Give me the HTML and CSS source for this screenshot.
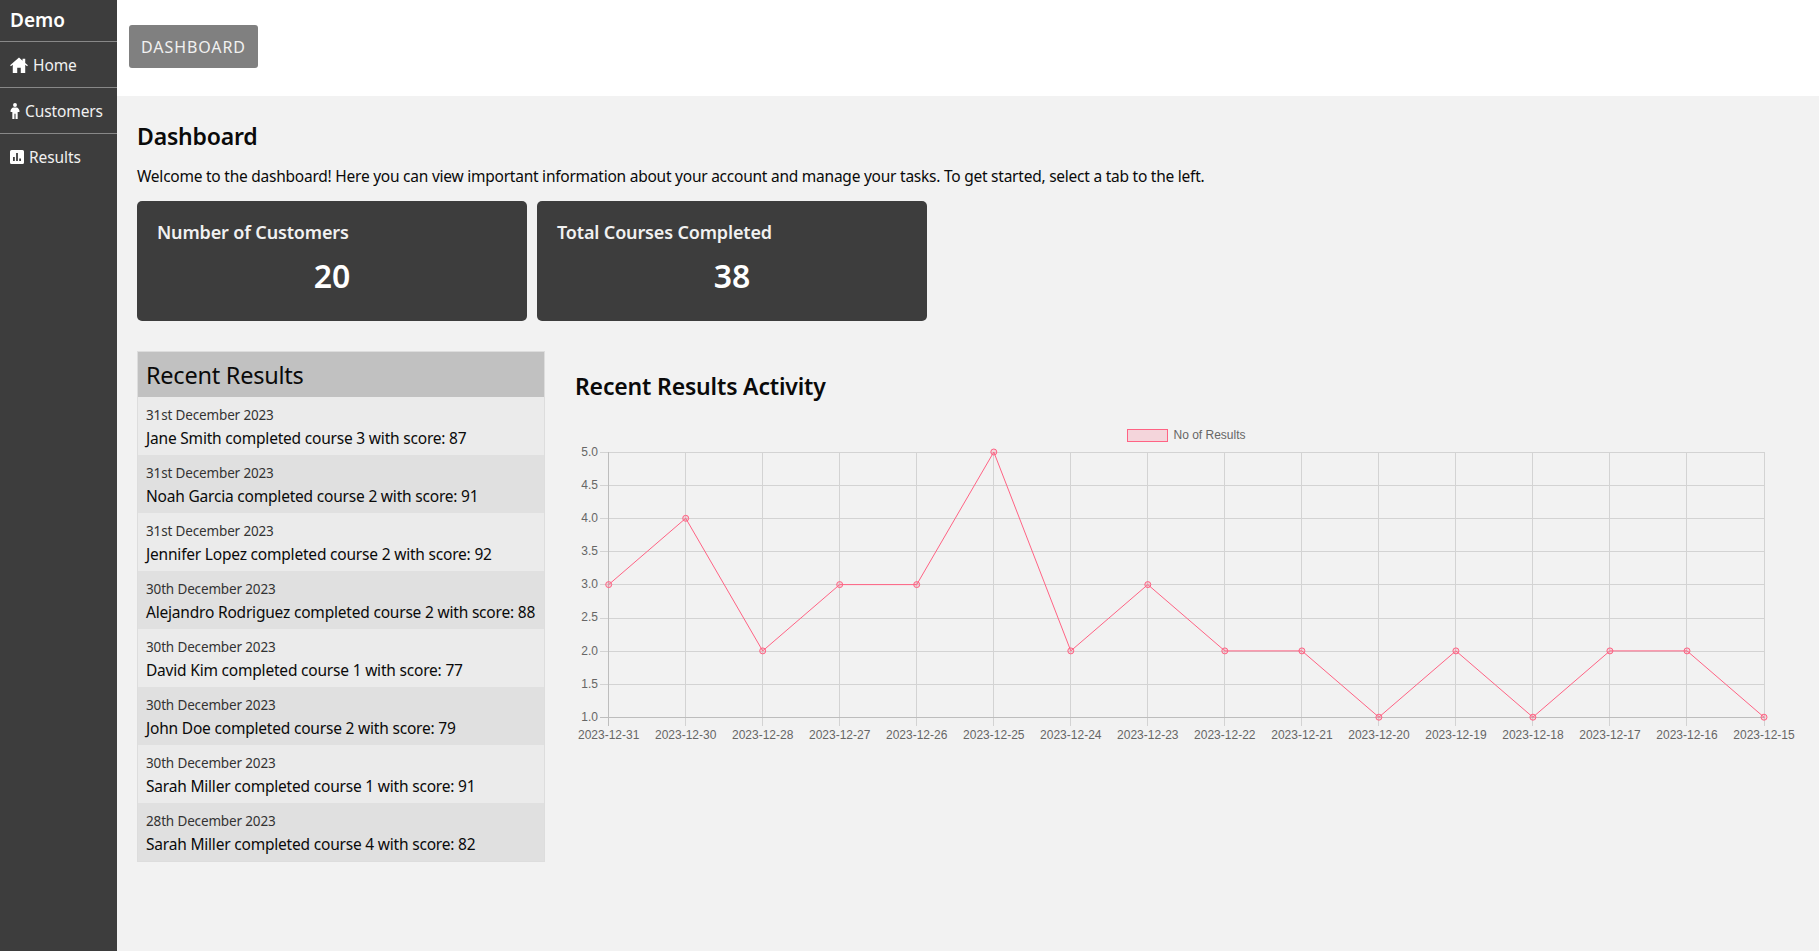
FILE: index.html
```html
<!DOCTYPE html>
<html lang="en">
<head>
<meta charset="utf-8">
<title>Dashboard</title>
<link rel="stylesheet" href="styles.css">
</head>
<body>
<div class="app">
  <nav class="sidebar">
    <div class="brand">Demo</div>
    <a class="nav-item"><svg class="nav-icon home" viewBox="0 0 20 18"><path d="M10 .5 0 9.3l.9 1.1L3 8.6V18h5v-6h4v6h5V8.6l2.1 1.8.9-1.1-3-2.6V2h-3v2.1z"/></svg>Home</a>
    <a class="nav-item"><svg class="nav-icon man" viewBox="0 0 10 18"><circle cx="5" cy="2.2" r="2.2"/><path d="M3.2 5h3.6c1.500 0 3.200 2.300 3.200 3.600V10H8v8H5.600v-6H4.400v6H2v-8H0V8.600C0 7.300 1.700 5 3.200 5z"/></svg>Customers</a>
    <a class="nav-item"><svg class="nav-icon poll" viewBox="0 0 14 14"><path fill-rule="evenodd" d="M1.500 0h11A1.500 1.500 0 0 1 14 1.500v11a1.500 1.500 0 0 1-1.500 1.500h-11A1.500 1.500 0 0 1 0 12.500v-11A1.500 1.500 0 0 1 1.500 0zM3 7v4h1.800V7zm3.100-4v8h1.800V3zm3.100 5.500V11H11V8.500z"/></svg>Results</a>
  </nav>
  <div class="page">
    <header class="topbar"><button class="tab">DASHBOARD</button></header>
    <main class="content">
      <h1 class="title">Dashboard</h1>
      <p class="intro">Welcome to the dashboard! Here you can view important information about your account and manage your tasks. To get started, select a tab to the left.</p>
      <div class="cards">
        <section class="card"><h2 class="card-title">Number of Customers</h2><div class="card-value">20</div></section>
        <section class="card"><h2 class="card-title">Total Courses Completed</h2><div class="card-value">38</div></section>
      </div>
      <div class="lower">
        <section class="results">
          <h2 class="results-head">Recent Results</h2>
          <div class="row"><div class="date">31st December 2023</div><div class="line">Jane Smith completed course 3 with score: 87</div></div>
          <div class="row"><div class="date">31st December 2023</div><div class="line">Noah Garcia completed course 2 with score: 91</div></div>
          <div class="row"><div class="date">31st December 2023</div><div class="line">Jennifer Lopez completed course 2 with score: 92</div></div>
          <div class="row"><div class="date">30th December 2023</div><div class="line">Alejandro Rodriguez completed course 2 with score: 88</div></div>
          <div class="row"><div class="date">30th December 2023</div><div class="line">David Kim completed course 1 with score: 77</div></div>
          <div class="row"><div class="date">30th December 2023</div><div class="line">John Doe completed course 2 with score: 79</div></div>
          <div class="row"><div class="date">30th December 2023</div><div class="line">Sarah Miller completed course 1 with score: 91</div></div>
          <div class="row"><div class="date">28th December 2023</div><div class="line">Sarah Miller completed course 4 with score: 82</div></div>
        </section>
        <section class="activity">
          <h2 class="activity-title">Recent Results Activity</h2>
          <svg class="chart" viewBox="575 420 1230 330" width="1230" height="330">
            <g class="grid">
              <path d="M600 452.500H1764M600 485.500H1764M600 518.500H1764M600 551.500H1764M600 584.500H1764M600 618.500H1764M600 651.500H1764M600 684.500H1764"/>
              <path d="M685.500 452V726M762.500 452V726M839.500 452V726M916.500 452V726M993.500 452V726M1070.500 452V726M1147.500 452V726M1224.500 452V726M1301.500 452V726M1378.500 452V726M1455.500 452V726M1532.500 452V726M1609.500 452V726M1686.500 452V726M1764.500 452V726"/>
            </g>
            <path class="axis" d="M600 717.500H1765M608.500 452V726"/>
            <g class="ticks ticks-y">
              <text x="598" y="455.500">5.0</text><text x="598" y="488.500">4.5</text><text x="598" y="521.500">4.0</text><text x="598" y="554.500">3.5</text><text x="598" y="588">3.0</text><text x="598" y="621">2.5</text><text x="598" y="654.500">2.0</text><text x="598" y="687.500">1.5</text><text x="598" y="720.500">1.0</text>
            </g>
            <g class="ticks ticks-x">
              <text x="608.700" y="739">2023-12-31</text><text x="685.700" y="739">2023-12-30</text><text x="762.700" y="739">2023-12-28</text><text x="839.700" y="739">2023-12-27</text><text x="916.700" y="739">2023-12-26</text><text x="993.800" y="739">2023-12-25</text><text x="1070.800" y="739">2023-12-24</text><text x="1147.800" y="739">2023-12-23</text><text x="1224.800" y="739">2023-12-22</text><text x="1301.900" y="739">2023-12-21</text><text x="1378.900" y="739">2023-12-20</text><text x="1455.900" y="739">2023-12-19</text><text x="1532.900" y="739">2023-12-18</text><text x="1609.900" y="739">2023-12-17</text><text x="1687" y="739">2023-12-16</text><text x="1764" y="739">2023-12-15</text>
            </g>
            <rect class="legend-box" x="1127.500" y="429.500" width="40" height="12"/>
            <text class="legend-text" x="1173.500" y="438.500">No of Results</text>
            <polyline class="series" points="608.700,584.600 685.700,518.300 762.700,650.900 839.700,584.600 916.700,584.600 993.800,452 1070.800,650.900 1147.800,584.600 1224.800,650.900 1301.900,650.900 1378.900,717.200 1455.900,650.900 1532.900,717.200 1609.900,650.900 1687,650.900 1764,717.200"/>
            <g class="points">
              <circle cx="608.700" cy="584.600" r="3"/><circle cx="685.700" cy="518.300" r="3"/><circle cx="762.700" cy="650.900" r="3"/><circle cx="839.700" cy="584.600" r="3"/><circle cx="916.700" cy="584.600" r="3"/><circle cx="993.800" cy="452" r="3"/><circle cx="1070.800" cy="650.900" r="3"/><circle cx="1147.800" cy="584.600" r="3"/><circle cx="1224.800" cy="650.900" r="3"/><circle cx="1301.900" cy="650.900" r="3"/><circle cx="1378.900" cy="717.200" r="3"/><circle cx="1455.900" cy="650.900" r="3"/><circle cx="1532.900" cy="717.200" r="3"/><circle cx="1609.900" cy="650.900" r="3"/><circle cx="1687" cy="650.900" r="3"/><circle cx="1764" cy="717.200" r="3"/>
            </g>
          </svg>
        </section>
      </div>
    </main>
  </div>
</div>
</body>
</html>
```
FILE: styles.css
```css
* { box-sizing: border-box; }
html, body { margin: 0; height: 100%; }
body { font-family: "Noto Sans", sans-serif; font-size: 15.5px; letter-spacing: -0.24px; color: #0a0a0a; background: #f2f2f2; overflow: hidden; }
.app { display: flex; height: 951px; }
.sidebar { width: 117px; flex: none; background: #3d3d3d; color: #f1f1f1; }
.brand { height: 42px; padding-left: 10px; font-size: 19px; font-weight: 600; letter-spacing: 0; line-height: 40px; color: #fff; border-bottom: 1px solid #888; }
.nav-item { display: flex; align-items: center; gap: 5px; height: 46px; padding-left: 10px; border-bottom: 1px solid #888; font-size: 15.5px; letter-spacing: -0.1px; }
.nav-item:last-child { border-bottom: 0; }
.nav-icon { fill: #fff; flex: none; }
.home { width: 18px; height: 16px; }
.man { width: 10px; height: 16px; }
.poll { width: 14px; height: 14px; }
.page { flex: 1; min-width: 0; display: flex; flex-direction: column; }
.topbar { height: 96px; background: #fff; padding: 25px 12px; }
.tab { display: block; width: 129px; height: 43px; padding: 0; border: 0; border-radius: 3px; background: #808080; color: #f1f1f1; font-family: inherit; font-size: 16px; letter-spacing: 0.9px; }
.content { flex: 1; padding: 24px 20px 0; }
.title { margin: 0; font-size: 23px; font-weight: 600; letter-spacing: -0.2px; line-height: 33px; }
.intro { margin: 12px 0 0; line-height: 22px; }
.cards { display: flex; gap: 10px; margin-top: 14px; }
.card { width: 390px; height: 120px; padding: 19px 20px; border-radius: 5px; background: #3d3d3d; color: #f1f1f1; }
.card-title { margin: 0; font-size: 18px; font-weight: 600; letter-spacing: -0.15px; line-height: 25px; }
.card-value { margin-top: 11px; text-align: center; font-size: 32px; font-weight: 600; letter-spacing: 0; line-height: 40px; color: #fff; }
.lower { display: flex; margin-top: 30px; align-items: flex-start; }
.results { width: 408px; flex: none; border: 1px solid #ddd; }
.results-head { margin: 0; height: 45px; padding-left: 8px; background: #c1c1c1; font-size: 23.5px; font-weight: 400; letter-spacing: -0.25px; line-height: 46px; }
.row { height: 58px; padding: 8px 8px 0; background: #ebebeb; }
.row:nth-child(odd) { background: #e0e0e0; }
.date { font-size: 13.5px; letter-spacing: -0.15px; line-height: 20px; color: #333; }
.line { line-height: 26px; letter-spacing: -0.2px; white-space: nowrap; }
.activity { margin-left: 30px; flex: none; }
.activity-title { margin: 19px 0 0; font-size: 23px; font-weight: 600; letter-spacing: -0.17px; line-height: 33px; }
.chart { display: block; margin-top: 17px; letter-spacing: 0; }
.grid path { fill: none; stroke: #d3d3d3; stroke-width: 1; shape-rendering: crispEdges; }
.axis { fill: none; stroke: #bdbdbd; stroke-width: 1; shape-rendering: crispEdges; }
.ticks, .legend-text { font-family: "Liberation Sans", Arial, sans-serif; font-size: 12px; fill: #666; }
.ticks-y { text-anchor: end; }
.ticks-x { text-anchor: middle; }
.legend-box { fill: rgba(255, 99, 132, 0.2); stroke: #ff6384; stroke-width: 1; }
.series { fill: none; stroke: #ff6384; stroke-width: 1; }
.points circle { fill: rgba(255, 99, 132, 0.2); stroke: #ff6384; stroke-width: 1; }
```
